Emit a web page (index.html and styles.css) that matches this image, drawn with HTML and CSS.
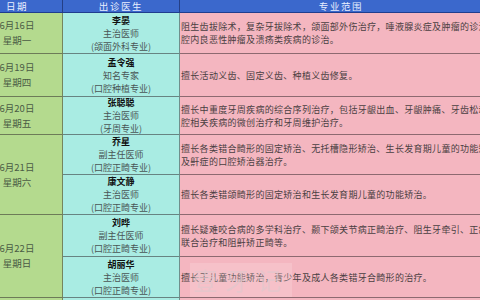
FILE: index.html
```html
<!DOCTYPE html>
<html lang="zh-CN">
<head>
<meta charset="utf-8">
<title>出诊安排</title>
<link rel="stylesheet" href="styles.css">
</head>
<body>
<div class="sheet">
  <div class="grid">
    <div class="hd c-date"><span>日期</span></div>
    <div class="hd c-doc"><span>出诊医生</span></div>
    <div class="hd c-spec"><span>专业范围</span></div>

    <div class="date"><div>6月16日<br>星期一</div></div>
    <div class="doc"><div><b>李晏</b><br>主治医师<br>(颌面外科专业)</div></div>
    <div class="spec"><div>阻生齿拔除术，复杂牙拔除术，颌面部外伤治疗，唾液腺炎症及肿瘤的诊治，口<br>腔内良恶性肿瘤及溃疡类疾病的诊治。</div></div>

    <div class="date"><div>6月19日<br>星期四</div></div>
    <div class="doc"><div><b>孟令强</b><br>知名专家<br>(口腔种植专业)</div></div>
    <div class="spec"><div>擅长活动义齿、固定义齿、种植义齿修复。</div></div>

    <div class="date"><div>6月20日<br>星期五</div></div>
    <div class="doc"><div><b>张聪聪</b><br>主治医师<br>(牙周专业)</div></div>
    <div class="spec"><div>擅长中重度牙周疾病的综合序列治疗，包括牙龈出血、牙龈肿痛、牙齿松动，口<br>腔相关疾病的微创治疗和牙周维护治疗。</div></div>

    <div class="date span2"><div>6月21日<br>星期六</div></div>
    <div class="doc"><div><b>乔星</b><br>副主任医师<br>(口腔正畸专业)</div></div>
    <div class="spec"><div>擅长各类错合畸形的固定矫治、无托槽隐形矫治、生长发育期儿童的功能矫治<br>及鼾症的口腔矫治器治疗。</div></div>
    <div class="doc"><div><b>康文静</b><br>主治医师<br>(口腔正畸专业)</div></div>
    <div class="spec"><div>擅长各类错颌畸形的固定矫治和生长发育期儿童的功能矫治。</div></div>

    <div class="date span2"><div>6月22日<br>星期日</div></div>
    <div class="doc"><div><b>刘晔</b><br>副主任医师<br>(口腔正畸专业)</div></div>
    <div class="spec"><div>擅长疑难咬合病的多学科治疗、颞下颌关节病正畸治疗、阻生牙牵引、正颌<br>联合治疗和阻鼾矫正畸等。</div></div>
    <div class="doc"><div><b>胡丽华</b><br>主治医师<br>(口腔正畸专业)</div></div>
    <div class="spec"><div>擅长于儿童功能矫治，青少年及成人各类错牙合畸形的治疗。</div></div>

    <div class="date"></div>
    <div class="doc"></div>
    <div class="spec"></div>
  </div>
  <div class="watermark">壹牙记</div>
</div>
</body>
</html>
```

FILE: styles.css
```css
html, body {
  margin: 0;
  padding: 0;
  width: 480px;
  height: 300px;
  overflow: hidden;
  background: #f4b6c0;
}

.sheet {
  position: relative;
  width: 480px;
  height: 300px;
  overflow: hidden;
  font-family: "Noto Sans CJK SC", "Noto Sans", sans-serif;
  font-size: 9px;
  color: #444;
}

.grid {
  display: grid;
  margin-left: -28px;
  width: 531px;
  grid-template-columns: 91px 117px 323px;
  grid-template-rows: 13px 41px 43px 38px 40px 40px 42px 41px 30px;
}

.grid > div {
  box-sizing: border-box;
  display: flex;
  align-items: center;
  overflow: visible;
  white-space: nowrap;
  border-bottom: 1px solid rgba(40, 30, 35, 0.5);
  border-right: 1px solid rgba(40, 30, 35, 0.45);
}

.hd {
  background: #3b68cc;
  color: #e9efff;
  font-size: 9.5px;
  letter-spacing: 1.6px;
  justify-content: center;
  line-height: 12px;
  border-bottom: 1px solid #1f3d8e !important;
  border-right: 1px solid #243f86 !important;
}

.c-date { grid-column: 1; }
.c-doc { grid-column: 2; }
.c-spec { grid-column: 3; }

.date {
  grid-column: 1;
  background: #b4da8e;
  color: #4b5a45;
  justify-content: center;
  text-align: center;
  font-size: 9.5px;
  line-height: 15px;
}

.span2 { grid-row: span 2; }

.doc {
  grid-column: 2;
  background: #a9ece3;
  color: #4a5555;
  justify-content: center;
  text-align: center;
  line-height: 13px;
}

.doc b {
  color: #111;
  font-weight: 700;
}

.spec {
  grid-column: 3;
  background: #f4b6c0;
  color: #4a3f42;
  padding-left: 1px;
  line-height: 13px;
  letter-spacing: 0.3px;
}

.watermark {
  position: absolute;
  left: 190px;
  top: 263px;
  width: 102px;
  height: 34px;
  background: rgba(255, 240, 242, 0.2);
  color: rgba(225, 200, 205, 0.7);
  font-size: 24px;
  line-height: 34px;
  letter-spacing: 8px;
  text-align: center;
  font-family: "Noto Sans CJK SC", sans-serif;
}
```
